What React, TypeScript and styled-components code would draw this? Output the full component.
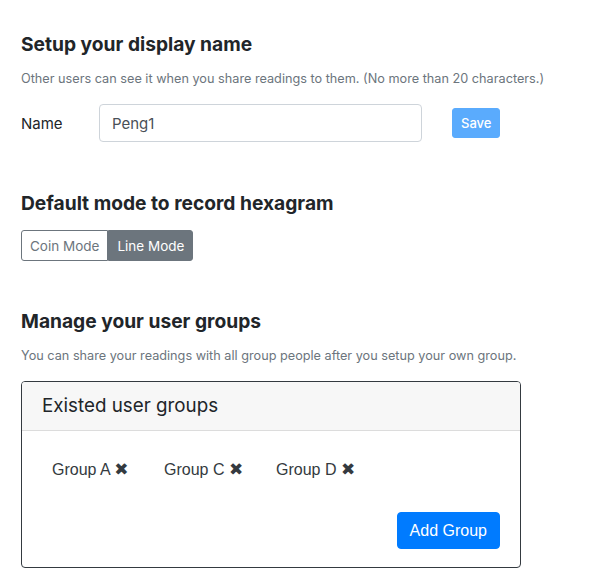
import React from "react";
import styled, { createGlobalStyle } from "styled-components";

const GlobalStyle = createGlobalStyle`
  body {
    margin: 0;
    font-family: Inter, "Noto Sans", sans-serif;
    color: #212529;
    background: #fff;
  }
`;

const groups = ["Group A", "Group C", "Group D"];

const App = () => {
  return (
    <Page>
      <GlobalStyle />
      <Section>
        <Heading>Setup your display name</Heading>
        <Hint>Other users can see it when you share readings to them. (No more than 20 characters.)</Hint>
        <NameRow>
          <Label>Name</Label>
          <Input defaultValue="Peng1" />
          <SaveButton disabled>Save</SaveButton>
        </NameRow>
      </Section>

      <Section space={47}>
        <Heading>Default mode to record hexagram</Heading>
        <ToggleGroup>
          <Toggle>Coin Mode</Toggle>
          <Toggle active>Line Mode</Toggle>
        </ToggleGroup>
      </Section>

      <Section space={0}>
        <Heading>Manage your user groups</Heading>
        <Hint>You can share your readings with all group people after you setup your own group.</Hint>
        <Card>
          <CardHeader>Existed user groups</CardHeader>
          <CardBody>
            <GroupList>
              {groups.map((g) => (
                <GroupItem key={g}>
                  {g} <Remove>✖</Remove>
                </GroupItem>
              ))}
            </GroupList>
            <Actions>
              <AddButton>Add Group</AddButton>
            </Actions>
          </CardBody>
        </Card>
      </Section>
    </Page>
  );
};

export default App;

const Page = styled.div`
  padding: 31px 0 0 21px;
  display: flex;
  flex-direction: column;
`;

const Section = styled.div<{ space?: number }>`
  display: flex;
  flex-direction: column;
  align-items: flex-start;
  margin-bottom: ${(p) => (p.space ?? 48)}px;
`;

const Heading = styled.h5`
  margin: 0 0 12px;
  font-size: 19.2px;
  font-weight: 700;
  line-height: 26px;
`;

const Hint = styled.small`
  display: block;
  font-size: 12.7px;
  color: #6c757d;
  line-height: 20px;
  margin-bottom: 15px;
`;

const NameRow = styled.div`
  display: flex;
  align-items: center;
`;

const Label = styled.label`
  width: 78px;
  font-size: 15px;
`;

const Input = styled.input`
  box-sizing: border-box;
  width: 323px;
  height: 38px;
  padding: 6px 12px;
  font-family: Inter, sans-serif;
  font-size: 15px;
  color: #495057;
  border: 1px solid #ced4da;
  border-radius: 4px;
  outline: none;
`;

const SaveButton = styled.button`
  margin-left: 30px;
  height: 30px;
  padding: 0 8px;
  font-family: Inter, sans-serif;
  font-size: 13px;
  font-weight: 500;
  color: #fff;
  background: #5aabfd;
  border: 1px solid #5aabfd;
  border-radius: 3px;
`;

const ToggleGroup = styled.div`
  display: flex;
  margin-top: 2px;
`;

const Toggle = styled.button<{ active?: boolean }>`
  height: 31px;
  padding: 0 8px;
  font-family: Inter, sans-serif;
  font-size: 13.5px;
  color: ${(p) => (p.active ? "#fff" : "#6c757d")};
  background: ${(p) => (p.active ? "#6c757d" : "#fff")};
  border: 1px solid #6c757d;
  border-radius: ${(p) => (p.active ? "0 3px 3px 0" : "3px 0 0 3px")};
`;

const Card = styled.div`
  box-sizing: border-box;
  width: 500px;
  border: 1px solid #343a40;
  border-radius: 4px;
  overflow: hidden;
`;

const CardHeader = styled.div`
  padding: 12px 20px;
  height: 24px;
  line-height: 24px;
  font-size: 18.8px;
  background: #f7f7f7;
  border-bottom: 1px solid #dcdcdc;
`;

const CardBody = styled.div`
  padding: 25px 20px 18px;
`;

const GroupList = styled.div`
  display: flex;
  padding-left: 10px;
`;

const GroupItem = styled.span`
  width: 112px;
  font-family: "Liberation Sans", Arial, sans-serif;
  font-size: 16px;
  line-height: 26px;
  color: #343a40;
`;

const Remove = styled.span`
  font-family: "DejaVu Sans", sans-serif;
  font-size: 17px;
`;

const Actions = styled.div`
  display: flex;
  justify-content: flex-end;
  margin-top: 29px;
`;

const AddButton = styled.button`
  height: 37px;
  padding: 0 12px;
  font-family: "Liberation Sans", Arial, sans-serif;
  font-size: 16px;
  color: #fff;
  background: #007bff;
  border: 1px solid #007bff;
  border-radius: 4px;
`;
